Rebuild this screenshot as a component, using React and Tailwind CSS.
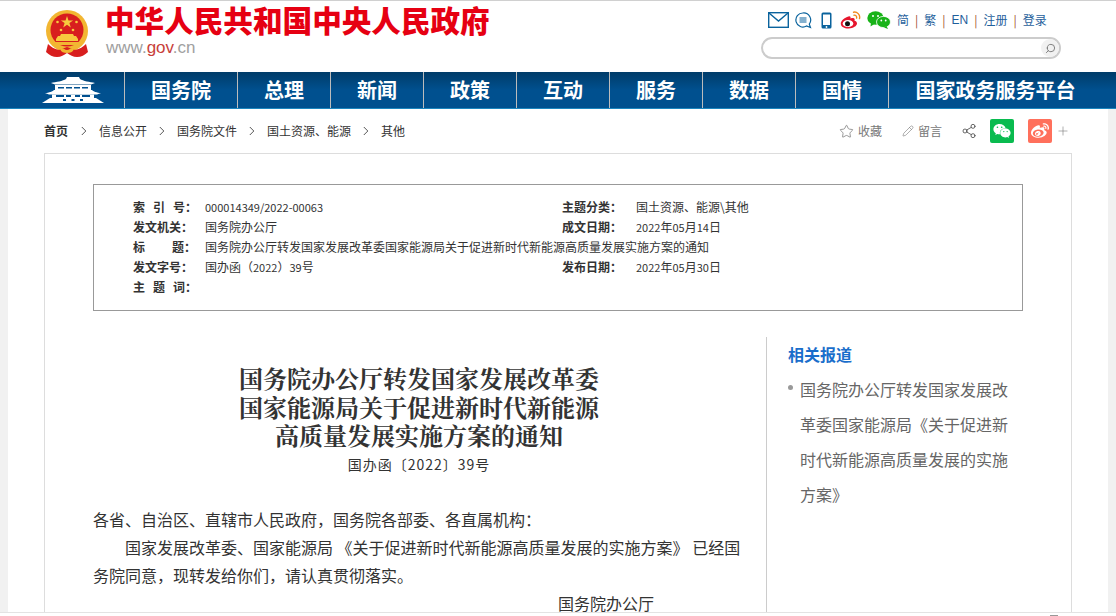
import React from 'react';
import { Star, Pencil, Share2, Plus, Search } from 'lucide-react';
import { FaWeixin, FaWeibo } from 'react-icons/fa';

const sans = "font-['Noto_Sans_CJK_SC','Liberation_Sans',sans-serif]";

const navItems = [
  { label: '国务院', w: 'w-[113px]' },
  { label: '总理', w: 'w-[93px]' },
  { label: '新闻', w: 'w-[93px]' },
  { label: '政策', w: 'w-[93px]' },
  { label: '互动', w: 'w-[93px]' },
  { label: '服务', w: 'w-[93px]' },
  { label: '数据', w: 'w-[93px]' },
  { label: '国情', w: 'w-[93px]' },
  { label: '国家政务服务平台', w: 'w-[214px]' },
];

const crumbs = ['信息公开', '国务院文件', '国土资源、能源', '其他'];

const Emblem = () => (
  <svg width="44" height="48" viewBox="0 0 44 48" className="shrink-0">
    <circle cx="22" cy="21" r="21" fill="#f2b632" />
    <circle cx="22" cy="20" r="16.5" fill="#d81e1e" />
    <path d="M22 6l1.500 4.400h4.600l-3.700 2.700 1.400 4.400-3.800-2.700-3.800 2.700 1.400-4.400-3.700-2.700h4.600z" fill="#f7c93e" />
    <circle cx="12.500" cy="12" r="1.300" fill="#f7c93e" />
    <circle cx="31.500" cy="12" r="1.300" fill="#f7c93e" />
    <circle cx="16" cy="20" r="1.300" fill="#f7c93e" />
    <circle cx="28" cy="20" r="1.300" fill="#f7c93e" />
    <path d="M16 24h12l1 2h2l2 3v2H11v-2l2-3h2z" fill="#f7c93e" />
    <path d="M9 32h26v3H9z" fill="#f2b632" />
    <path d="M3 34c3 3 6 5 11 6l8-3 8 3c5-1 8-3 11-6l2 8c-3 3-7 5-11 5-4 0-7-2-10-4-3 2-6 4-10 4-4 0-8-2-11-5z" fill="#d81e1e" />
    <path d="M15 39c3-2 4 1 7 1s4-3 7-1c-1 3-4 4-7 4s-6-1-7-4z" fill="#f2b632" />
  </svg>
);

const Gate = () => (
  <svg width="62" height="26" viewBox="0 0 62 26" fill="#ffffff">
    <path d="M25 0h12l1 2c3 2 10 3 15 4l-4 1.500H13l-4-1.500c5-1 12-2 15-4z" />
    <path d="M13 8h36v5H13z" />
    <path d="M16 10h6v1.500h-6zM24 10h6v1.500h-6zM32 10h6v1.500h-6zM40 10h6v1.500h-6z" fill="#00508f" />
    <path d="M12 13h38c1 1 5 3 9 3l-4 1.500H7l-4-1.500c4 0 8-2 9-3z" />
    <path d="M10 17.500h42V21H10z" />
    <path d="M14 18h8v2h-8zM24 18h5v2h-5zM33 18h5v2h-5zM40 18h8v2h-8z" fill="#00508f" />
    <path d="M8 21h46l8 5H0z" />
    <path d="M21 22h3v2h-3zM29.500 22h3v2h-3zM38 22h3v2h-3z" fill="#00508f" />
  </svg>
);

const Mail = () => (
  <svg width="21" height="16" viewBox="0 0 21 16" fill="none" stroke="#0a639d" strokeWidth="1.4">
    <rect x="0.7" y="0.7" width="19.6" height="14.6" />
    <path d="M1 1l9.5 8L20 1" />
  </svg>
);

const Chat = () => (
  <svg width="17" height="17" viewBox="0 0 17 17" fill="none" stroke="#0a639d" strokeWidth="1.2">
    <path d="M8 1a7 7 0 1 0 3.500 13l4 1.500-1.200-3.400A7 7 0 0 0 8 1z" />
    <path d="M4.500 6h7M4.500 8h7M4.500 10h7" />
  </svg>
);

const Phone = () => (
  <svg width="11" height="17" viewBox="0 0 11 17">
    <rect x="0.5" y="0.5" width="10" height="16" rx="1.5" fill="#0a639d" />
    <rect x="2" y="2.5" width="7" height="10.5" fill="#ffffff" />
    <circle cx="5.5" cy="15" r="0.9" fill="#ffffff" />
  </svg>
);

const Weibo = () => (
  <svg width="22" height="18" viewBox="0 0 22 18" fill="none">
    <path d="M8.500 5.500C4.500 6.500 0.500 10 0.800 13c.3 3 4 4.700 8 4.500 4.500-.2 8-2.500 8.200-5 .1-1.700-1.400-2.500-2.500-2.800.5-1.500.3-3-2-2.800-.8.100-2 .6-2 .6.3-1.600-.3-2.500-2-2z" fill="#e6162d" />
    <ellipse cx="8" cy="12.500" rx="5.300" ry="3.600" fill="#ffffff" />
    <circle cx="7.500" cy="12.800" r="2.500" fill="#111111" />
    <path d="M13.500 1.200c3.500-.8 7 2.500 6 6.300M14 4.200c1.800-.3 3 1.200 2.600 2.900" stroke="#f08a1d" strokeWidth="1.400" strokeLinecap="round" />
  </svg>
);

const WeChat = () => (
  <svg width="24" height="18" viewBox="0 0 24 18">
    <ellipse cx="8.500" cy="7" rx="8.200" ry="6.700" fill="#18b318" />
    <path d="M4 11.500l-.5 4 4-2.500z" fill="#18b318" />
    <ellipse cx="16.500" cy="11" rx="7" ry="5.600" fill="#18b318" stroke="#ffffff" strokeWidth="0.800" />
    <path d="M19.500 15l1.500 3-4-1.500z" fill="#18b318" />
    <circle cx="6" cy="5" r="1" fill="#ffffff" />
    <circle cx="11" cy="5" r="1" fill="#ffffff" />
    <circle cx="14.300" cy="9.500" r="0.900" fill="#ffffff" />
    <circle cx="18.700" cy="9.500" r="0.900" fill="#ffffff" />
  </svg>
);

const Sep = () => <span className="mx-[6px] text-[12px] text-[#a0522d]">|</span>;

const Header = () => (
  <header className="h-[72px] shrink-0 flex justify-between border-t border-[#d0d0d0] bg-white pl-[45px]">
    <div className="flex">
      <div className="pt-[9px]">
        <Emblem />
      </div>
      <div className="ml-[16px]">
        <div className="mt-[1px] h-[38px] text-[29.6px] leading-[36px] font-black text-[#e60012] whitespace-nowrap">
          中华人民共和国中央人民政府
        </div>
        <div className="ml-[1px] text-[17px] leading-[16px] font-['Liberation_Sans',sans-serif] text-[#a0a0a0]">
          www.<span className="text-[#c8403a]">gov</span>.cn
        </div>
      </div>
    </div>
    <div className="w-[355px] pt-[10px]">
      <div className="flex items-center h-[18px] pl-[7px]">
        <Mail />
        <span className="ml-[6px] flex"><Chat /></span>
        <span className="ml-[9px] flex"><Phone /></span>
        <span className="ml-[8px] flex"><Weibo /></span>
        <span className="ml-[5px] flex"><WeChat /></span>
        <span className="ml-[6px] flex items-center text-[12px] text-[#1f5f9c] whitespace-nowrap">
          简<Sep />繁<Sep /><span className="font-['Liberation_Sans',sans-serif]">EN</span><Sep />注册<Sep />登录
        </span>
      </div>
      <div className="mt-[8px] w-[300px] h-[22px] flex justify-end rounded-full border-2 border-[#cccccc] bg-white">
        <span className="w-[18px] h-[18px] rounded-full bg-[#f1f1f1] flex items-center justify-center">
          <Search size={11} color="#777777" className="-scale-x-100" />
        </span>
      </div>
    </div>
  </header>
);

const Nav = () => (
  <nav className="h-[37px] shrink-0 flex bg-gradient-to-b from-[#003c69] via-[#00508f] to-[#00508f] border-b border-[#1b86bf]">
    <div className="w-[124px] shrink-0 flex items-center justify-end pr-[20px]">
      <Gate />
    </div>
    {navItems.map((item) => (
      <div
        key={item.label}
        className={`${item.w} shrink-0 border-l border-[#bcbcbc] flex items-center justify-center text-[20px] font-bold text-white whitespace-nowrap`}
      >
        {item.label}
      </div>
    ))}
  </nav>
);

const Chevron = () => (
  <svg width="6" height="10" viewBox="0 0 6 10" fill="none" stroke="#555555" className="mx-[12px] shrink-0">
    <path d="M0.800 1l4 4-4 4" />
  </svg>
);

const Breadcrumb = () => (
  <div className="h-[44px] flex items-center justify-between">
    <div className="flex items-center text-[12px] text-[#333333] whitespace-nowrap">
      <span className="font-bold mr-[1px]">首页</span>
      <Chevron />
      {crumbs.map((c, i) => (
        <React.Fragment key={c}>
          <span>{c}</span>
          {i < crumbs.length - 1 && <Chevron />}
        </React.Fragment>
      ))}
    </div>
    <div className="flex items-center text-[12px] text-[#777777] pr-[2px]">
      <Star size={15} strokeWidth={1.2} />
      <span className="ml-[4px]">收藏</span>
      <Pencil size={12} strokeWidth={1.2} className="ml-[20px]" />
      <span className="ml-[4px]">留言</span>
      <Share2 size={16} strokeWidth={1.2} color="#444444" className="ml-[19px]" />
      <span className="ml-[13px] w-[24px] h-[24px] rounded-[2px] bg-[#09bb4f] flex items-center justify-center">
        <FaWeixin size={18} color="#ffffff" />
      </span>
      <span className="ml-[14px] w-[24px] h-[24px] rounded-[2px] bg-[#ff705c] flex items-center justify-center">
        <FaWeibo size={18} color="#ffffff" />
      </span>
      <Plus size={14} strokeWidth={1} className="ml-[4px]" />
    </div>
  </div>
);

// digits in the reference are narrower than the CJK font's, so they go one size down
const mix = (text) =>
  text.split(/([0-9/\-]+)/).map((part, i) =>
    i % 2 ? <span key={i} className="text-[11px]">{part}</span> : part
  );

const metaRows = [
  [
    { id: 'a', label: <><span className="tracking-[8px]">索引</span>号：</>, value: '000014349/2022-00063' },
    { id: 'b', label: '主题分类：', value: '国土资源、能源\\其他' },
  ],
  [
    { id: 'c', label: '发文机关：', value: '国务院办公厅' },
    { id: 'd', label: '成文日期：', value: '2022年05月14日' },
  ],
  [{ id: 'e', label: <><span className="tracking-[27px]">标</span>题：</>, value: '国务院办公厅转发国家发展改革委国家能源局关于促进新时代新能源高质量发展实施方案的通知' }],
  [
    { id: 'f', label: '发文字号：', value: '国办函（2022）39号' },
    { id: 'g', label: '发布日期：', value: '2022年05月30日' },
  ],
  [{ id: 'h', label: <><span className="tracking-[8px]">主题</span>词：</>, value: '' }],
];

const MetaBox = () => (
  <div className="h-[127px] border border-[#999999] pl-[39px] pt-[12px] text-[12px] leading-[20px] text-[#333333]">
    {metaRows.map((row) => (
      <div key={row[0].id} className="flex h-[20px] whitespace-nowrap">
        {row.map((cell, i) => (
          <div key={cell.id} className={`flex ${i === 0 ? 'w-[429px]' : ''}`}>
            <span className={`${i === 0 ? 'w-[72px]' : 'w-[74px]'} shrink-0 font-bold`}>{cell.label}</span>
            <span>{mix(cell.value)}</span>
          </div>
        ))}
      </div>
    ))}
  </div>
);

const Article = () => (
  <div className="w-[652px] shrink-0 text-[16px] leading-[28px] text-[#333333]">
    <h1 className="mt-[53px] text-center text-[24px] leading-[28.500px] font-bold font-['Noto_Serif_CJK_SC','Liberation_Serif',serif] text-[#333333]">
      国务院办公厅转发国家发展改革委
      <br />
      国家能源局关于促进新时代新能源
      <br />
      高质量发展实施方案的通知
    </h1>
    <p className="mt-[1px] text-center text-[14px] leading-[26px] tracking-[1px]">国办函〔2022〕39号</p>
    <p className="mt-[28px]">各省、自治区、直辖市人民政府，国务院各部委、各直属机构：</p>
    <p className="indent-[32px] w-[650px]">
      国家发展改革委、国家能源局 《关于促进新时代新能源高质量发展的实施方案》 已经国务院同意，现转发给你们，请认真贯彻落实。
    </p>
    <p className="pl-[465px]">国务院办公厅</p>
  </div>
);

const Related = () => (
  <aside className="ml-[21px] mt-[26px] h-[400px] border-l border-[#cccccc] pl-[21px] pt-[5px]">
    <h2 className="text-[16px] leading-[24px] font-bold text-[#1a6ecb]">相关报道</h2>
    <div className="relative mt-[6px] w-[220px] pl-[12px] text-[16px] leading-[35px] text-[#666666]">
      <span className="absolute left-0 top-[13px] w-[5px] h-[5px] rounded-full bg-[#999999]" />
      国务院办公厅转发国家发展改革委国家能源局《关于促进新时代新能源高质量发展的实施方案》
    </div>
  </aside>
);

export default function App() {
  return (
    <div className={`${sans} h-[616px] w-[1116px] overflow-hidden flex flex-col bg-white`}>
      <Header />
      <Nav />
      <div className="flex-1 min-h-0 overflow-hidden bg-[#f1f1f1] px-[8px]">
        <main className="h-full bg-white px-[36px]">
          <Breadcrumb />
          <div className="h-[600px] border border-[#dddddd] px-[48px] pt-[30px]">
            <MetaBox />
            <div className="flex">
              <Article />
              <Related />
            </div>
          </div>
        </main>
      </div>
      <div className="h-[4px] shrink-0 flex items-end justify-end pr-[58px] border-t border-[#e3e3e3] bg-white">
        <span className="w-[8px] h-[1px] bg-[#999999]" />
      </div>
    </div>
  );
}
